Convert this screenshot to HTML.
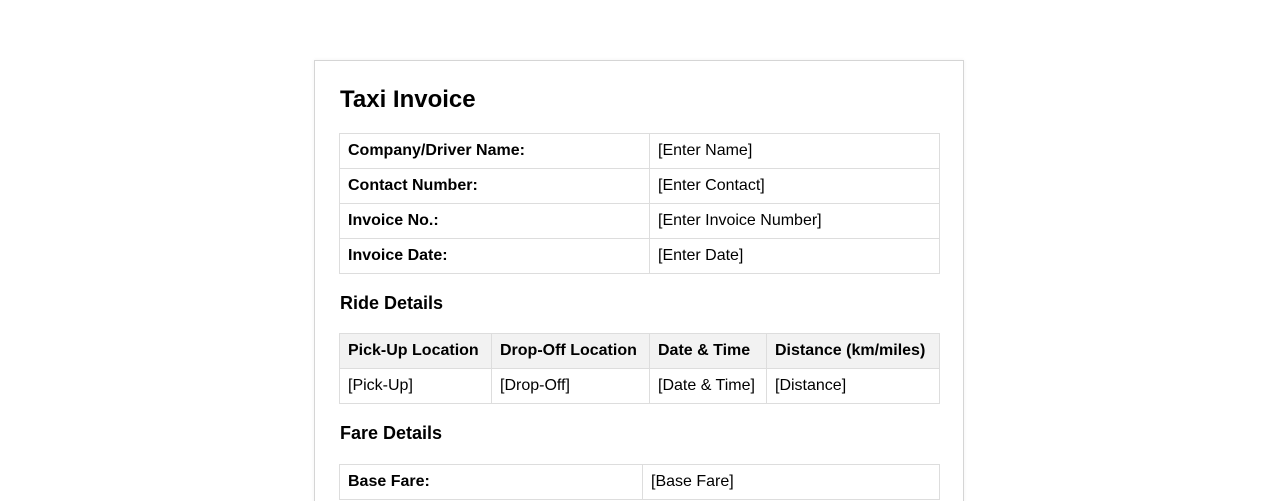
<!DOCTYPE html>
<html><head><style>
html,body{margin:0;width:1278px;height:501px;overflow:hidden}
body{background:#fff;font-family:"Liberation Sans",Arial,sans-serif;color:#000;position:relative}
.box{position:absolute;left:314px;top:60px;width:648px;height:445px;border:1px solid #d5d5d5;border-bottom:none;box-shadow:0 0 4px rgba(0,0,0,0.06)}
h1{position:absolute;left:340px;top:86px;margin:0;font-size:24px;font-weight:bold;line-height:28px}
h2{position:absolute;left:340px;margin:0;font-size:18px;font-weight:bold;line-height:22px}
table{position:absolute;left:339px;width:600px;border-collapse:collapse;table-layout:fixed}
td,th{border:1px solid #ddd;height:35px;padding:0 8px;font-size:16px;text-align:left;box-sizing:border-box}
th{background:#f2f2f2;font-weight:bold}
td.b{font-weight:bold}
</style></head><body>
<div class="box"></div>
<h1>Taxi Invoice</h1>
<table style="top:133px">
<colgroup><col style="width:310px"><col style="width:290px"></colgroup>
<tr><td class="b">Company/Driver Name:</td><td>[Enter Name]</td></tr>
<tr><td class="b">Contact Number:</td><td>[Enter Contact]</td></tr>
<tr><td class="b">Invoice No.:</td><td>[Enter Invoice Number]</td></tr>
<tr><td class="b">Invoice Date:</td><td>[Enter Date]</td></tr>
</table>
<h2 style="top:292px">Ride Details</h2>
<table style="top:333px">
<colgroup><col style="width:152px"><col style="width:158px"><col style="width:117px"><col style="width:173px"></colgroup>
<tr><th>Pick-Up Location</th><th>Drop-Off Location</th><th>Date &amp; Time</th><th>Distance (km/miles)</th></tr>
<tr><td>[Pick-Up]</td><td>[Drop-Off]</td><td>[Date &amp; Time]</td><td>[Distance]</td></tr>
</table>
<h2 style="top:422px">Fare Details</h2>
<table style="top:464px">
<colgroup><col style="width:303px"><col style="width:297px"></colgroup>
<tr><td class="b">Base Fare:</td><td>[Base Fare]</td></tr>
</table>
</body></html>
